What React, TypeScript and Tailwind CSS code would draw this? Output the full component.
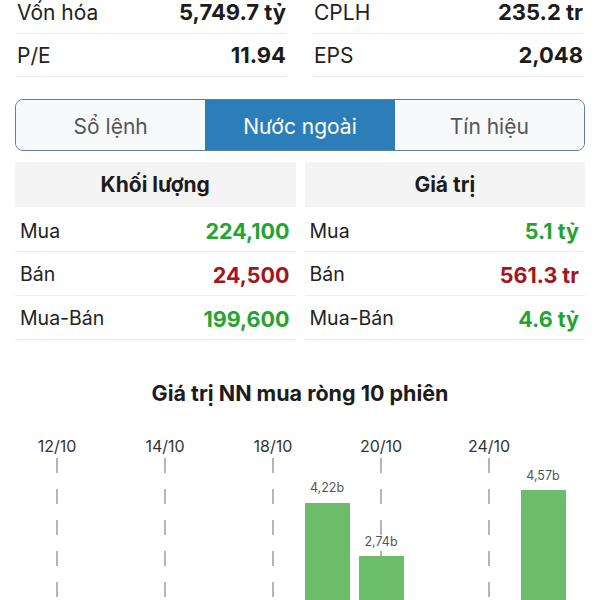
import { useState } from "react";

type Stat = { label: string; value: string };

const overview: Stat[][] = [
  [
    { label: "Vốn hóa", value: "5,749.7 tỷ" },
    { label: "P/E", value: "11.94" },
  ],
  [
    { label: "CPLH", value: "235.2 tr" },
    { label: "EPS", value: "2,048" },
  ],
];

type Flow = { label: string; value: string; up: boolean };

const volume: Flow[] = [
  { label: "Mua", value: "224,100", up: true },
  { label: "Bán", value: "24,500", up: false },
  { label: "Mua-Bán", value: "199,600", up: true },
];

const amount: Flow[] = [
  { label: "Mua", value: "5.1 tỷ", up: true },
  { label: "Bán", value: "561.3 tr", up: false },
  { label: "Mua-Bán", value: "4.6 tỷ", up: true },
];

// 10 sessions, labels on every other one
const sessions = [
  { date: "12/10", value: 0 },
  { date: "13/10", value: 0 },
  { date: "14/10", value: 0 },
  { date: "17/10", value: 0 },
  { date: "18/10", value: 0 },
  { date: "19/10", value: 4.22 },
  { date: "20/10", value: 2.74 },
  { date: "21/10", value: 0 },
  { date: "24/10", value: 0 },
  { date: "25/10", value: 4.57 },
];

const PX_PER_BILLION = 36;

function FlowTable({ title, rows }: { title: string; rows: Flow[] }) {
  return (
    <div className="flex flex-col">
      <div className="h-[45px] flex items-center justify-center bg-[#f4f4f4] text-[21px] font-bold text-[#1c1c1c]">
        {title}
      </div>
      {rows.map((r, i) => (
        <div
          key={r.label}
          className={
            i === 0
              ? "h-[45px] pt-[5px] flex items-center justify-between pl-[5px] pr-[6px] border-b border-[#ececec]"
              : "h-[44px] pt-[3px] flex items-center justify-between pl-[5px] pr-[6px] border-b border-[#ececec]"
          }
        >
          <span className="text-[19.5px] text-[#222]">{r.label}</span>
          <span
            className={
              r.up
                ? "text-[21.5px] font-bold text-[#22a431]"
                : "text-[21.5px] font-bold text-[#a6141d]"
            }
          >
            {r.value}
          </span>
        </div>
      ))}
    </div>
  );
}

export default function App() {
  type ITabs = "Sổ lệnh" | "Nước ngoài" | "Tín hiệu";
  const [tab, setTab] = useState<ITabs>("Nước ngoài");
  const tabs: ITabs[] = ["Sổ lệnh", "Nước ngoài", "Tín hiệu"];

  return (
    <div className="w-[600px] h-[600px] overflow-hidden bg-white font-['Inter','Liberation_Sans',sans-serif]">
      {/* Overview */}
      <div className="-mt-[9px] grid grid-cols-2 gap-[28px] pl-[17px] pr-[17px]">
        {overview.map((col, i) => (
          <div key={i} className="flex flex-col">
            {col.map((s) => (
              <div
                key={s.label}
                className="h-[43px] pt-[1px] flex items-center justify-between border-b border-[#ededed]"
              >
                <span className="text-[21px] text-[#222]">{s.label}</span>
                <span className="text-[22px] font-bold text-[#1c1c1c]">
                  {s.value}
                </span>
              </div>
            ))}
          </div>
        ))}
      </div>

      {/* Tabs */}
      <div className="mt-[22px] mx-[15px] h-[52px] flex border-[1.5px] border-[#5f7f99] rounded-[8px] overflow-hidden">
        {tabs.map((t) => (
          <button
            key={t}
            onClick={() => setTab(t)}
            className={
              tab === t
                ? "flex-1 pt-[3px] flex items-center justify-center bg-[#2c7eb8] text-white text-[21px]"
                : "flex-1 pt-[3px] flex items-center justify-center bg-[#f7f9fb] text-[#555] text-[21px]"
            }
          >
            {t}
          </button>
        ))}
      </div>

      {/* Foreign flows */}
      <div className="mt-[11px] mx-[15px] grid grid-cols-2 gap-[9px]">
        <FlowTable title="Khối lượng" rows={volume} />
        <FlowTable title="Giá trị" rows={amount} />
      </div>

      {/* Chart */}
      <div className="mt-[39px] h-[28px] flex items-center justify-center text-[21.5px] font-bold text-[#1c1c1c]">
        Giá trị NN mua ròng 10 phiên
      </div>
      <div className="mt-[29px] mx-auto w-[540px] flex">
        {sessions.map((s, i) => (
          <div key={s.date} className="w-[54px] flex flex-col items-center">
            <div className="h-[20px] flex items-center text-[16px] text-[#333]">
              {i % 2 === 0 ? s.date : ""}
            </div>
            <div className="mt-[2px] h-[197px] w-full grid">
              {i % 2 === 0 ? (
                <div className="col-start-1 row-start-1 justify-self-center w-[2px] h-full bg-[linear-gradient(to_bottom,#b5b5b5_15px,transparent_15px)] bg-[length:2px_31px]" />
              ) : null}
              {s.value > 0 ? (
                <div className="col-start-1 row-start-1 self-end justify-self-center flex flex-col items-center">
                  <span className="text-[12.5px] text-[#555] mb-[5px]">
                    {s.value.toFixed(2).replace(".", ",")}b
                  </span>
                  <div
                    className="w-[45px] bg-[#6bbd69]"
                    style={{ height: s.value * PX_PER_BILLION }}
                  />
                </div>
              ) : null}
            </div>
          </div>
        ))}
      </div>
    </div>
  );
}
